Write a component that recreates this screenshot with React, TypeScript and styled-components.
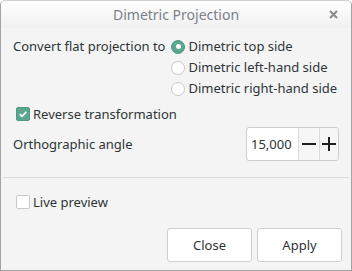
import React from 'react';
import styled, { createGlobalStyle } from 'styled-components';

const GlobalStyle = createGlobalStyle`
  html, body {
    margin: 0;
    padding: 0;
    background: #ffffff;
  }
  * {
    box-sizing: border-box;
  }
`;

const Window = styled.div`
  width: 352px;
  height: 271px;
  display: flex;
  flex-direction: column;
  background: #f4f4f4;
  border: 1px solid #a3a3a3;
  border-top-color: #d0d0d0;
  border-radius: 5px 5px 0 0;
  overflow: hidden;
  font-family: 'Noto Sans', 'Open Sans', sans-serif;
  font-size: 13px;
  color: #2e3436;
`;

const TitleBar = styled.div`
  position: relative;
  height: 27px;
  flex-shrink: 0;
  display: flex;
  align-items: center;
  justify-content: center;
  background: linear-gradient(#ffffff, #f0f0f0);
`;

const Title = styled.div`
  font-size: 14px;
  color: #7b8189;
`;

const CloseIcon = styled.svg`
  position: absolute;
  right: 13px;
  top: 9px;
`;

const Body = styled.div`
  flex: 1;
  display: flex;
  flex-direction: column;
  padding: 8px 12px 0 12px;
`;

const ProjectionRow = styled.div`
  display: flex;
  gap: 6px;
`;

const Label = styled.span`
  line-height: 21px;
  white-space: nowrap;
`;

const RadioList = styled.div`
  display: flex;
  flex-direction: column;
`;

const RadioRow = styled.div`
  display: flex;
  align-items: center;
  gap: 3px;
  height: 21px;
`;

const Radio = styled.span<{ checked?: boolean }>`
  width: 14px;
  height: 14px;
  border-radius: 50%;
  display: flex;
  align-items: center;
  justify-content: center;
  background: ${(p) => (p.checked ? '#5aa68e' : '#ffffff')};
  border: 1px solid ${(p) => (p.checked ? '#4e9a82' : '#c9c9c9')};

  &::after {
    content: '';
    width: 5px;
    height: 5px;
    border-radius: 50%;
    background: #ffffff;
    display: ${(p) => (p.checked ? 'block' : 'none')};
  }
`;

const CheckRow = styled.div<{ top: number }>`
  display: flex;
  align-items: center;
  gap: 3px;
  padding-left: 3px;
  height: 22px;
  margin-top: ${(p) => p.top}px;
`;

const Check = styled.span<{ checked?: boolean }>`
  width: 14px;
  height: 14px;
  border-radius: 2px;
  display: flex;
  align-items: center;
  justify-content: center;
  background: ${(p) => (p.checked ? '#5aa68e' : '#ffffff')};
  border: 1px solid ${(p) => (p.checked ? '#4e9a82' : '#c9c9c9')};
`;

const AngleRow = styled.div`
  display: flex;
  align-items: center;
  justify-content: space-between;
  margin-top: 2px;
`;

const SpinBox = styled.div`
  display: flex;
  height: 34px;
  border: 1px solid #cdcdcd;
  border-radius: 3px;
  background: #ffffff;
  overflow: hidden;
`;

const SpinValue = styled.div`
  width: 51px;
  display: flex;
  align-items: center;
  padding-left: 4px;
  font-size: 13px;
`;

const SpinButton = styled.div<{ w: number }>`
  width: ${(p) => p.w}px;
  display: flex;
  align-items: center;
  justify-content: center;
  background: #f6f6f6;
  border-left: 1px solid #dcdcdc;
`;

const Separator = styled.div`
  height: 1px;
  background: #d8d8d8;
  margin: 16px -10px 0 -10px;
`;

const Footer = styled.div`
  display: flex;
  justify-content: flex-end;
  gap: 5px;
  margin: auto -3px 0 0;
  padding-bottom: 8px;
`;

const Button = styled.div`
  width: 85px;
  height: 34px;
  display: flex;
  align-items: center;
  justify-content: center;
  border: 1px solid #cfcfcf;
  border-radius: 3px;
  background: #ffffff;
  font-size: 13px;
`;

const Tick = () => (
  <svg width="10" height="10" viewBox="0 0 10 10">
    <path d="M1.8 5.2 L4 7.3 L8.3 2.8" fill="none" stroke="#ffffff" strokeWidth="1.8" />
  </svg>
);

const App: React.FC = () => {
  return (
    <>
      <GlobalStyle />
      <Window>
        <TitleBar>
          <Title>Dimetric Projection</Title>
          <CloseIcon width="9" height="9" viewBox="0 0 9 9">
            <path d="M1 1 L8 8 M8 1 L1 8" stroke="#8a8a8a" strokeWidth="2" />
          </CloseIcon>
        </TitleBar>
        <Body>
          <ProjectionRow>
            <Label>Convert flat projection to</Label>
            <RadioList>
              <RadioRow>
                <Radio checked />
                <Label>Dimetric top side</Label>
              </RadioRow>
              <RadioRow>
                <Radio />
                <Label>Dimetric left-hand side</Label>
              </RadioRow>
              <RadioRow>
                <Radio />
                <Label>Dimetric right-hand side</Label>
              </RadioRow>
            </RadioList>
          </ProjectionRow>
          <CheckRow top={4}>
            <Check checked>
              <Tick />
            </Check>
            <Label>Reverse transformation</Label>
          </CheckRow>
          <AngleRow>
            <Label>Orthographic angle</Label>
            <SpinBox>
              <SpinValue>15,000</SpinValue>
              <SpinButton w={21}>
                <svg width="14" height="14" viewBox="0 0 14 14">
                  <path d="M0 7 H14" stroke="#1e1e1e" strokeWidth="2" />
                </svg>
              </SpinButton>
              <SpinButton w={19}>
                <svg width="14" height="14" viewBox="0 0 14 14">
                  <path d="M0 7 H14 M7 0 V14" stroke="#1e1e1e" strokeWidth="2" />
                </svg>
              </SpinButton>
            </SpinBox>
          </AngleRow>
          <Separator />
          <CheckRow top={13}>
            <Check />
            <Label>Live preview</Label>
          </CheckRow>
          <Footer>
            <Button>Close</Button>
            <Button>Apply</Button>
          </Footer>
        </Body>
      </Window>
    </>
  );
};

export default App;
